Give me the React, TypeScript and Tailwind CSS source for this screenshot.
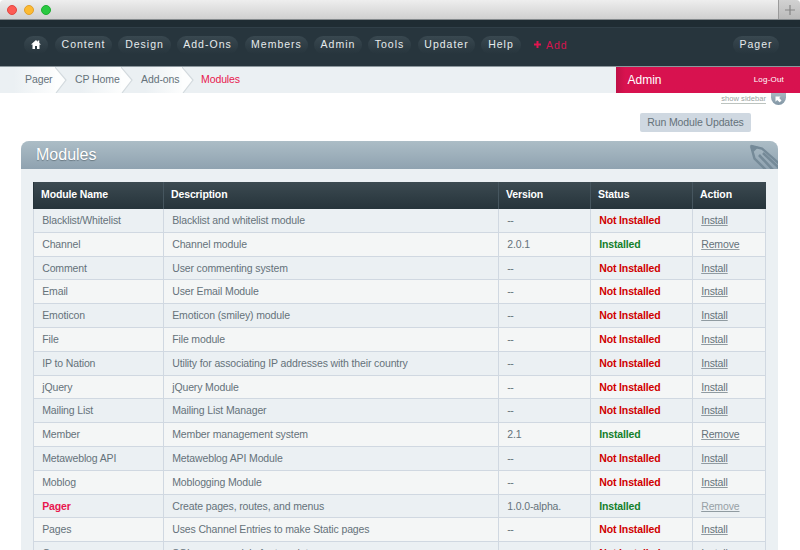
const navItems = [
  { label: 'Content', box: 'ml-[7px] w-[57px]' },
  { label: 'Design', box: 'ml-[6px] w-[53px]' },
  { label: 'Add-Ons', box: 'ml-[6px] w-[61px]' },
  { label: 'Members', box: 'ml-[7px] w-[63px]' },
  { label: 'Admin', box: 'ml-[6px] w-[48px]' },
  { label: 'Tools', box: 'ml-[6px] w-[43px]' },
  { label: 'Updater', box: 'ml-[7px] w-[57px]' },
  { label: 'Help', box: 'ml-[6px] w-[40px]' },
];

const modules = [
  ['Blacklist/Whitelist', 'Blacklist and whitelist module', '--'],
  ['Channel', 'Channel module', '2.0.1'],
  ['Comment', 'User commenting system', '--'],
  ['Email', 'User Email Module', '--'],
  ['Emoticon', 'Emoticon (smiley) module', '--'],
  ['File', 'File module', '--'],
  ['IP to Nation', 'Utility for associating IP addresses with their country', '--'],
  ['jQuery', 'jQuery Module', '--'],
  ['Mailing List', 'Mailing List Manager', '--'],
  ['Member', 'Member management system', '2.1'],
  ['Metaweblog API', 'Metaweblog API Module', '--'],
  ['Moblog', 'Moblogging Module', '--'],
  ['Pager', 'Create pages, routes, and menus', '1.0.0-alpha.'],
  ['Pages', 'Uses Channel Entries to make Static pages', '--'],
  ['Query', 'SQL query module for templates', '--'],
];

const columns = 'grid grid-cols-[130px_335px_92px_102px_74px]';
const pill = 'h-[18px] rounded-[9px] bg-linear-to-b from-[#394850] to-[#27353d] text-center text-[10.5px] leading-[16px] tracking-[1px] text-[#e6ebed] whitespace-nowrap';

function Crumb({ label, box }: { label: string; box: string }) {
  return (
    <div className={`flex h-full items-center bg-linear-to-r from-[#ebf0f3] from-[25%] to-[#fcfdfd] ${box}`}>
      <span className="flex-1 whitespace-nowrap">{label}</span>
    </div>
  );
}

function CrumbArrow() {
  return (
    <svg className="h-[26px] w-[12px] shrink-0" viewBox="0 0 12 26">
      <path d="M0 0h1l10 13L1 26H0z" fill="#fdfefe" />
      <path d="M0 0l11 13L1 26" fill="none" stroke="#d3dade" strokeWidth="1.2" />
    </svg>
  );
}

export default function App() {
  return (
    <div className="h-[550px] w-[800px] overflow-hidden bg-white font-['Liberation_Sans',Arial,sans-serif] text-[#65727a]">
      <div className="flex h-[20px] items-center overflow-hidden rounded-t-[4px] border-b border-[#858a8d] bg-linear-to-b from-[#eeeeee] to-[#d0d0d0]">
        <div className="ml-[7px] flex gap-[7px]">
          <i className="size-[10px] rounded-full border border-[#e2463f] bg-[#fd5b54]" />
          <i className="size-[10px] rounded-full border border-[#e1a02b] bg-[#fdbb32]" />
          <i className="size-[10px] rounded-full border border-[#1dae31] bg-[#29c941]" />
        </div>
        <div className="ml-auto flex h-full w-[22px] items-center justify-center border-l border-[#9b9b9b] bg-linear-to-b from-[#d2d2d2] to-[#bababa]">
          <svg className="size-[10px]" viewBox="0 0 10 10" stroke="#858585" strokeWidth="1.2"><path d="M5 0v10M0 5h10" /></svg>
        </div>
      </div>
      <div className="h-[7px] bg-[#1f2c33]" />
      <div className="flex h-[40px] items-start border-t border-b border-t-[#303f48] border-b-[#8c979d] bg-[#27353d] pt-[8px] pl-[24px]">
        <div className={`flex w-[24px] justify-center pt-[4px] ${pill}`}>
          <svg className="h-[9px] w-[10px]" viewBox="0 0 20 18" fill="#fff">
            <path d="M10 0L0 9.2h3V18h5v-6h4v6h5V9.2h3L16.5 6V1h-3v2.3z" />
          </svg>
        </div>
        {navItems.map(({ label, box }) => (
          <div key={label} className={`${pill} ${box}`}>{label}</div>
        ))}
        <div className="ml-[13px] flex pt-px text-[10.5px] leading-[16px] tracking-[1px] text-[#d8144f]">
          <svg className="mt-[4px] mr-[5px] size-[7px]" viewBox="0 0 7 7" stroke="#e0164f" strokeWidth="2"><path d="M3.5 0v7M0 3.5h7" /></svg>
          Add
        </div>
        <div className={`mr-[21px] ml-auto w-[46px] ${pill}`}>Pager</div>
      </div>
      <div className="flex h-[26px] bg-[#ebf0f3] text-[10.5px] tracking-[-0.1px]">
        <Crumb label="Pager" box="w-[55px] pl-[25px]" />
        <CrumbArrow />
        <Crumb label="CP Home" box="w-[54px] pl-[8px]" />
        <CrumbArrow />
        <Crumb label="Add-ons" box="w-[49px] pl-[8px]" />
        <CrumbArrow />
        <span className="ml-[7px] self-center text-[#e8174f]">Modules</span>
        <div className="ml-auto flex w-[184.5px] items-center justify-between bg-linear-to-r from-[#bf1046] to-[#d8124f] to-[5%] pr-[16px] pl-[12px] tracking-normal text-white">
          <span className="text-[12px]">Admin</span>
          <span className="text-[8px] tracking-[0.2px]">Log-Out</span>
        </div>
      </div>
      <div className="flex h-[20px] justify-end pr-[14px]">
        <span className="mt-[2px] h-[9px] border-b border-[#bcc3bf] text-[7.6px] leading-[8px] text-[#9aa49f]">show sidebar</span>
        <div className="ml-[5px] flex h-[12px] w-[15px] items-center justify-center rounded-b-[8px] bg-linear-to-b from-[#a9b8c1] to-[#8196a5]">
          <svg className="size-[7px]" viewBox="0 0 7 7" fill="#fff"><path d="M.5.5h5L4.2 2l2.3 2.6-1.8 1.7L2.2 4 .5 5.7z" /></svg>
        </div>
      </div>
      <div className="ml-[640px] flex h-[19px] w-[111px] items-center justify-center rounded-[2px] bg-[#cfd8e1] pt-px text-[10.5px] tracking-[-0.12px] text-[#65727a]">Run Module Updates</div>
      <div className="mt-[9px] ml-[21px] h-[409px] w-[757px] overflow-hidden rounded-t-[8px] bg-[#ebf0f3]">
        <div className="flex h-[28px] items-center justify-between bg-linear-to-b from-[#acbdc6] to-[#8fa2b0] pl-[15px] text-[16px] text-white">
          <span className="[text-shadow:0_1px_1px_#687780]">Modules</span>
          <svg className="h-[28px] w-[29px]" viewBox="0 0 29 28" fill="none" stroke="#758a98" strokeWidth="2.4">
            <path d="M2 5L13 7.500l17 15M2 5l3.500 12.500L17 29" />
            <path d="M1 4l8.500 2L4.500 11z" fill="#758a98" stroke="none" />
            <path d="M10 14l14 15M14 12l16 15" strokeWidth="2.600" />
          </svg>
        </div>
        <div className="mt-[13px] ml-[12px] w-[733px]">
          <div className={`${columns} h-[27px] bg-linear-to-b from-[#3c4a51] to-[#26343b] text-[10.5px] leading-[25px] font-bold tracking-[-0.12px] text-white`}>
            {['Module Name', 'Description', 'Version', 'Status', 'Action'].map((title) => (
              <span key={title} className="border-l border-[#46565f] pl-[7px] first:border-[#26343b]">{title}</span>
            ))}
          </div>
          {modules.map(([name, description, version]) => {
            const installed = version !== '--';
            const current = name === 'Pager';
            return (
              <div key={name} className={`${columns} h-[23.8px] border-r border-b border-[#d0d8e1] text-[10.5px] leading-[22px] tracking-[-0.13px] whitespace-nowrap odd:bg-[#f4f6f6] even:bg-[#ebf0f3] *:border-l *:border-[#d0d8e1] *:pl-[8.2px]`}>
                <span className={current ? 'font-bold text-[#e8174f]' : ''}>{name}</span>
                <span>{description}</span>
                <span className={installed ? '' : 'tracking-[-0.5px]'}>{version}</span>
                <span className={`font-bold ${installed ? 'text-[#137f2b]' : 'text-[#d00000]'}`}>{installed ? 'Installed' : 'Not Installed'}</span>
                <span className={`underline decoration-[#909ba1] decoration-1 underline-offset-1 ${current ? 'text-[#98a1a6]' : ''}`}>{installed ? 'Remove' : 'Install'}</span>
              </div>
            );
          })}
        </div>
      </div>
    </div>
  );
}
